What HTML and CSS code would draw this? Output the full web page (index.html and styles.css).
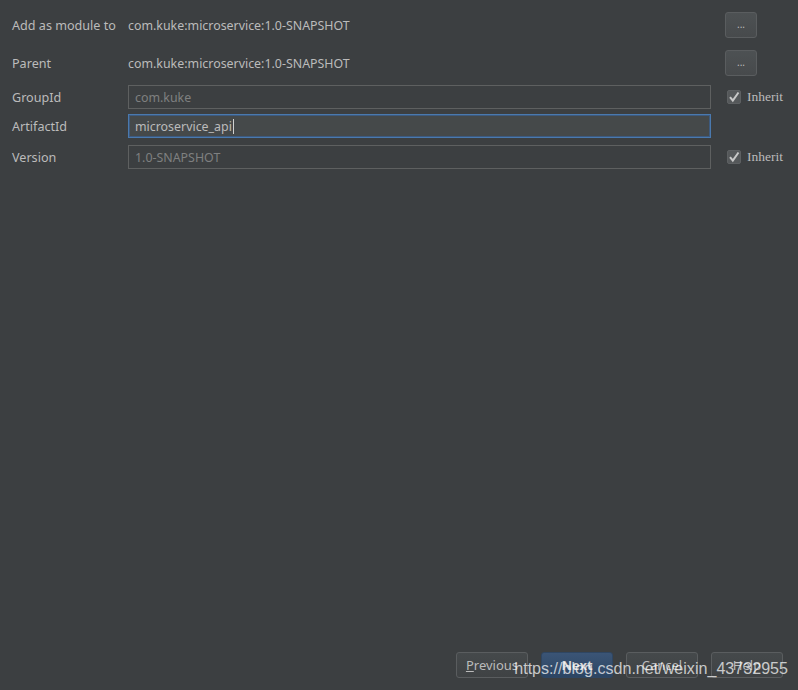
FILE: index.html
```html
<!DOCTYPE html>
<html>
<head>
<meta charset="utf-8">
<link rel="stylesheet" href="styles.css">
</head>
<body>
<div class="dialog">
  <div class="form">
    <div class="row row-module">
      <div class="label">Add as module to</div>
      <div class="value">com.kuke:microservice:1.0-SNAPSHOT</div>
      <button class="dots">...</button>
    </div>
    <div class="row row-parent">
      <div class="label">Parent</div>
      <div class="value">com.kuke:microservice:1.0-SNAPSHOT</div>
      <button class="dots">...</button>
    </div>
    <div class="row row-group">
      <div class="label">GroupId</div>
      <div class="field disabled">com.kuke</div>
      <label class="inherit"><span class="check"><svg width="12" height="12" viewBox="0 0 12 12"><path d="M2 6.2 L4.8 9.5 L10.5 1.5" fill="none" stroke="#c8c8c8" stroke-width="2"/></svg></span>Inherit</label>
    </div>
    <div class="row row-artifact">
      <div class="label">ArtifactId</div>
      <div class="field focused">microservice_api<span class="caret"></span></div>
      <div></div>
    </div>
    <div class="row row-version">
      <div class="label">Version</div>
      <div class="field disabled">1.0-SNAPSHOT</div>
      <label class="inherit"><span class="check"><svg width="12" height="12" viewBox="0 0 12 12"><path d="M2 6.2 L4.8 9.5 L10.5 1.5" fill="none" stroke="#c8c8c8" stroke-width="2"/></svg></span>Inherit</label>
    </div>
  </div>
  <div class="buttons">
    <button class="btn"><u>P</u>revious</button>
    <button class="btn primary">Next</button>
    <button class="btn">Cancel</button>
    <button class="btn">Help</button>
    <div class="watermark">https://blog.csdn.net/weixin_43732955</div>
  </div>
</div>
</body>
</html>
```

FILE: styles.css
```css
html, body {
  margin: 0;
  padding: 0;
  background: #3c3f41;
}
body {
  width: 798px;
  height: 690px;
  overflow: hidden;
  font-family: "Noto Sans", "Open Sans", sans-serif;
  font-size: 12.4px;
  color: #bbbbbb;
}
.dialog {
  height: 690px;
  display: flex;
  flex-direction: column;
  justify-content: space-between;
  box-sizing: border-box;
  padding: 12px 15px 12px 12px;
}
.form {
  display: flex;
  flex-direction: column;
}
.row {
  display: grid;
  grid-template-columns: 116px 583px 14px 60px;
  align-items: center;
}
.row > :nth-child(3) {
  grid-column: 4;
}
.row-module { height: 26px; }
.row-parent { height: 26px; margin-top: 12px; }
.row-group { height: 24px; margin-top: 9px; }
.row-artifact { height: 24px; margin-top: 5px; }
.row-version { height: 24px; margin-top: 7px; }
.label {
  white-space: nowrap;
  color: #bbbbbb;
  font-size: 12.6px;
}
.value {
  white-space: nowrap;
  color: #bbbbbb;
}
.dots {
  width: 32px;
  height: 26px;
  box-sizing: border-box;
  border: 1px solid #5a5d5f;
  border-radius: 3px;
  background: linear-gradient(#4d5153, #474a4c);
  color: #bbbbbb;
  font-family: "Noto Sans", sans-serif;
  font-size: 10px;
  line-height: 1;
  padding: 0 0 2px;
  display: flex;
  align-items: center;
  justify-content: center;
}
.field {
  height: 24px;
  box-sizing: border-box;
  border: 1px solid #5e6060;
  padding: 0 6px;
  display: flex;
  align-items: center;
  white-space: nowrap;
}
.field.disabled {
  color: #7f8080;
  background: #3c3f41;
}
.field.focused {
  border: 1px solid #4a79ae;
  box-shadow: inset 0 0 0 1px #3d5a7e;
  background: #45494a;
  color: #bbbbbb;
}
.caret {
  display: inline-block;
  width: 1px;
  height: 15px;
  background: #d0d0d0;
  margin-left: 1px;
}
.inherit {
  display: flex;
  align-items: center;
  white-space: nowrap;
  font-family: "Liberation Serif", "DejaVu Serif", serif;
  font-size: 13.5px;
  color: #bbbbbb;
  margin-left: 2px;
}
.check {
  width: 14px;
  height: 14px;
  box-sizing: border-box;
  border: 1px solid #5d6062;
  border-radius: 2px;
  background: #55585a;
  display: flex;
  align-items: center;
  justify-content: center;
  margin-right: 6px;
}
.buttons {
  position: relative;
  display: flex;
  justify-content: flex-end;
  gap: 13px;
}
.btn {
  width: 72px;
  height: 26px;
  box-sizing: border-box;
  border: 1px solid #5a5d5f;
  border-radius: 3px;
  background: linear-gradient(#45494b, #3f4244);
  color: #bbbbbb;
  font-family: "Noto Sans", sans-serif;
  font-size: 13px;
  padding: 0;
}
.btn u {
  text-decoration: underline;
}
.btn.primary {
  background: linear-gradient(#3b5576, #2c4563);
  border-color: #2f4662;
  color: #d8d8d8;
  font-weight: bold;
}
.watermark {
  position: absolute;
  right: -5px;
  top: 4px;
  font-family: "Liberation Sans", Arial, sans-serif;
  font-size: 16.1px;
  line-height: 24px;
  color: rgba(255, 255, 255, 0.72);
  white-space: nowrap;
  pointer-events: none;
}
```
